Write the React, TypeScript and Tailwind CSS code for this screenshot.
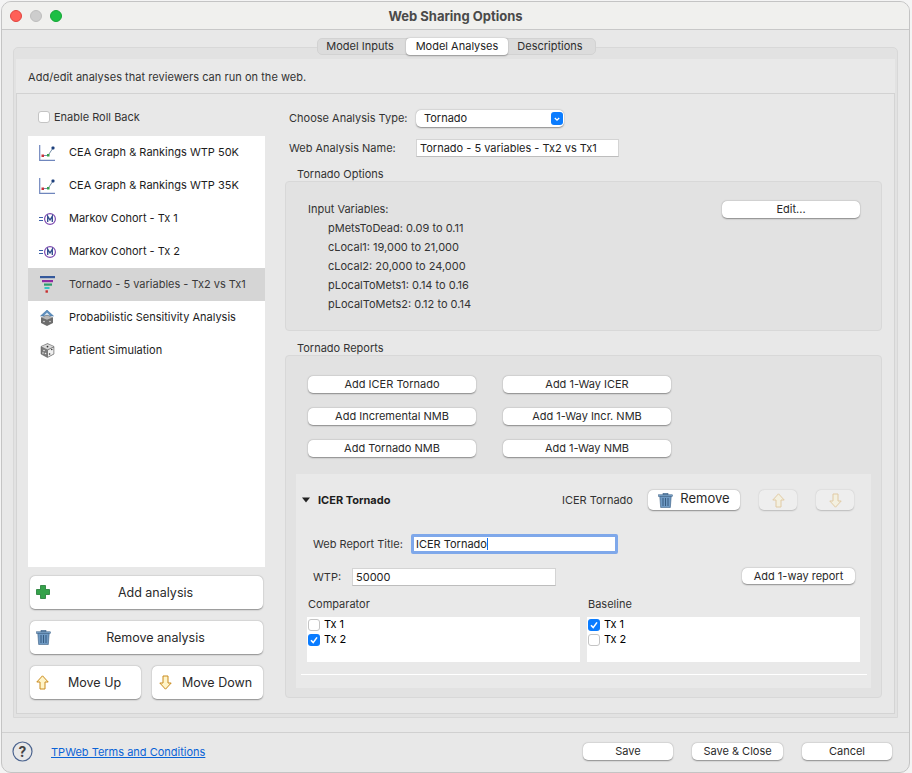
import React from 'react';

const macBtn = 'bg-white rounded-[5px] shadow-[0_0.5px_1.5px_rgba(0,0,0,0.4)] text-[#2a2a2a] flex items-center justify-center';

function PlainBtn({ label, className }: { label: string; className: string }) {
  return <button className={`${macBtn} text-[11px] ${className}`}>{label}</button>;
}

function Check({ on }: { on?: boolean }) {
  if (on) {
    return (
      <span className="w-[12px] h-[12px] rounded-[3px] bg-[#0a7cff] flex items-center justify-center shrink-0">
        <svg width="10" height="10" viewBox="0 0 10 10">
          <path d="M2 5.2 L4.2 7.6 L8 2.4" fill="none" stroke="#fff" strokeWidth="1.6" />
        </svg>
      </span>
    );
  }
  return <span className="w-[12px] h-[12px] rounded-[3px] bg-white border border-[#c4c4c4] shrink-0" />;
}

function GraphIcon() {
  return (
    <svg width="16" height="16" viewBox="0 0 16 16">
      <path d="M0.7 0 V15.3 H16" fill="none" stroke="#6f86bd" strokeWidth="1.2" />
      <path d="M3.5 10.5 H9 L14 3" fill="none" stroke="#51708f" strokeWidth="0.8" />
      <rect x="2.5" y="9.5" width="2.5" height="2.5" fill="#c8303a" />
      <rect x="8" y="9" width="2.5" height="2.5" fill="#35a04a" />
      <rect x="12.5" y="1.5" width="3" height="3" rx="1" fill="#1c3f7c" />
    </svg>
  );
}

function MarkovIcon() {
  return (
    <svg width="17" height="14" viewBox="0 0 17 14">
      <path d="M0 5.5 H4 M0 8.5 H4" stroke="#3a5ea8" strokeWidth="1" />
      <circle cx="11" cy="7" r="5.4" fill="#fff" stroke="#7e4bb0" strokeWidth="1.2" />
      <path d="M8.7 10 V4.2 L11 8 L13.3 4.2 V10" fill="none" stroke="#35518f" strokeWidth="1.4" />
    </svg>
  );
}

function TornadoIcon() {
  return (
    <svg width="15" height="17" viewBox="0 0 15 17">
      <rect x="0" y="0" width="15" height="2.2" fill="#34589b" />
      <rect x="2" y="4" width="11" height="2.2" fill="#8e2aa3" />
      <rect x="4" y="7.5" width="8" height="2.2" fill="#2f9a6b" />
      <rect x="4.5" y="11" width="5" height="2" fill="#35c2c2" />
      <rect x="5.5" y="14.3" width="2.4" height="2.4" fill="#c82e2e" />
    </svg>
  );
}

function PsaIcon() {
  return (
    <svg width="14" height="16" viewBox="0 0 14 16">
      <path d="M7 0 L13.5 6 H0.5 Z" fill="#5d8ebd" stroke="#3c6e9e" strokeWidth="0.5" />
      <path d="M7 2.5 L10 5.5 H4 Z" fill="#d7e4ef" />
      <path d="M7 5 L13 7.5 V13 L7 16 L1 13 V7.5 Z" fill="#6d6d6d" />
      <path d="M7 5.5 L12.5 7.6 L7 9.8 L1.5 7.6 Z" fill="#b9b9b9" />
      <circle cx="4" cy="11.5" r="0.8" fill="#ddd" />
      <circle cx="10" cy="11.5" r="0.8" fill="#ddd" />
    </svg>
  );
}

function DiceIcon() {
  return (
    <svg width="15" height="15" viewBox="0 0 15 15">
      <path d="M7.5 0.5 L14 3.5 V11 L7.5 14.5 L1 11 V3.5 Z" fill="#7b7b7b" stroke="#555" strokeWidth="0.5" />
      <path d="M7.5 1 L13.5 3.6 L7.5 6.6 L1.5 3.6 Z" fill="#d8d8d8" />
      <path d="M8 7.2 L13.5 4.4 V10.7 L8 13.8 Z" fill="#efefef" />
      <circle cx="7.5" cy="3.6" r="0.9" fill="#333" />
      <circle cx="4" cy="7.5" r="0.8" fill="#e6e6e6" />
      <circle cx="5.5" cy="10.5" r="0.8" fill="#e6e6e6" />
      <circle cx="3" cy="10" r="0.8" fill="#e6e6e6" />
      <circle cx="11.8" cy="6.5" r="0.8" fill="#333" />
      <circle cx="9.6" cy="11" r="0.8" fill="#333" />
    </svg>
  );
}

function Trash({ size = 15 }: { size?: number }) {
  return (
    <svg width={size} height={size} viewBox="0 0 15 15">
      <rect x="0.5" y="1.8" width="14" height="1.6" fill="#7ba3c9" stroke="#34597f" strokeWidth="0.5" />
      <rect x="5" y="0.3" width="5" height="1.5" fill="#6a93bb" stroke="#34597f" strokeWidth="0.5" />
      <path d="M1.8 3.4 H13.2 L12.3 14.6 H2.7 Z" fill="#6f9ac4" stroke="#34597f" strokeWidth="0.6" />
      <path d="M5 5 V13 M7.5 5 V13 M10 5 V13" stroke="#2f5378" strokeWidth="0.9" />
    </svg>
  );
}

function Arrow({ down, faded }: { down?: boolean; faded?: boolean }) {
  return (
    <svg width="13" height="15" viewBox="0 0 13 15" className={`${down ? 'rotate-180' : ''} ${faded ? 'opacity-35' : ''}`}>
      <path d="M6.5 0.8 L12.2 7 H9 V14 H4 V7 H0.8 Z" fill="#fff4c8" stroke="#c98a1c" strokeWidth="1" strokeLinejoin="round" />
    </svg>
  );
}

function Plus() {
  return (
    <svg width="14" height="14" viewBox="0 0 14 14">
      <path d="M4.5 0.5 H9.5 V4.5 H13.5 V9.5 H9.5 V13.5 H4.5 V9.5 H0.5 V4.5 H4.5 Z" fill="#35a24a" stroke="#1f7a34" strokeWidth="0.8" strokeLinejoin="round" />
    </svg>
  );
}

const analyses: { name: string; icon: React.ReactNode; selected?: boolean }[] = [
  { name: 'CEA Graph & Rankings WTP 50K', icon: <GraphIcon /> },
  { name: 'CEA Graph & Rankings WTP 35K', icon: <GraphIcon /> },
  { name: 'Markov Cohort - Tx 1', icon: <MarkovIcon /> },
  { name: 'Markov Cohort - Tx 2', icon: <MarkovIcon /> },
  { name: 'Tornado - 5 variables - Tx2 vs Tx1', icon: <TornadoIcon />, selected: true },
  { name: 'Probabilistic Sensitivity Analysis', icon: <PsaIcon /> },
  { name: 'Patient Simulation', icon: <DiceIcon /> },
];

const variables = [
  'pMetsToDead: 0.09 to 0.11',
  'cLocal1: 19,000 to 21,000',
  'cLocal2: 20,000 to 24,000',
  'pLocalToMets1: 0.14 to 0.16',
  'pLocalToMets2: 0.12 to 0.14',
];

const reportBtns = [
  'Add ICER Tornado',
  'Add 1-Way ICER',
  'Add Incremental NMB',
  'Add 1-Way Incr. NMB',
  'Add Tornado NMB',
  'Add 1-Way NMB',
];

function TxList({ checked, className }: { checked: number; className: string }) {
  return (
    <div className={`bg-white h-[45px] ${className}`}>
      {['Tx 1', 'Tx 2'].map((t, i) => (
        <div key={t} className="h-[15px] flex items-center gap-[4px] pl-[1px] text-black">
          <Check on={i === checked} />
          <span>{t}</span>
        </div>
      ))}
    </div>
  );
}

export default function App() {
  return (
    <div className="w-[912px] h-[773px] bg-[#f4f4f4] overflow-hidden text-[11px] text-[#333] font-['Inter','Liberation_Sans',sans-serif]">
      <div className="ml-[1px] mt-[1px] w-[909px] h-[772px] rounded-[10px] bg-[#e8e8e8] border border-[#c4c4c4] overflow-hidden flex flex-col">
        {/* title bar */}
        <div className="h-[28px] shrink-0 bg-[#f0f0ee] border-b border-[#c8c8c8] flex items-center pl-[8px] relative">
          <div className="flex gap-[8px]">
            <span className="w-[12px] h-[12px] rounded-full bg-[#ff5f57] border border-[#e0443e]" />
            <span className="w-[12px] h-[12px] rounded-full bg-[#cdcdcd] border border-[#bdbdbd]" />
            <span className="w-[12px] h-[12px] rounded-full bg-[#1dbf44] border border-[#14a636]" />
          </div>
          <div className="absolute left-0 right-0 top-[5px] text-center text-[13px] font-bold text-[#4a4a4a]">Web Sharing Options</div>
        </div>

        {/* outer tab box */}
        <div className="mt-[17px] ml-[11px] w-[885px] h-[671px] rounded-t-[5px] border border-[#d8d8d8] bg-[#e2e2e2] relative px-[2px] pt-[11px] shrink-0">
          <div className="absolute top-[-10px] left-[303px] w-[279px] h-[17px] rounded-[5px] bg-[#dcdcdc] border border-[#d2d2d2] flex items-center">
            <span className="w-[88px] text-center text-[#2e2e2e] pr-[4px]">Model Inputs</span>
            <span className="w-[102px] h-[17px] rounded-[4px] bg-white shadow-[0_0.5px_1.5px_rgba(0,0,0,0.35)] flex items-center justify-center text-[#222]">Model Analyses</span>
            <span className="w-[87px] text-center text-[#2e2e2e] pr-[3px]">Descriptions</span>
          </div>

          <div className="bg-[#e9e9e9] h-[35px] flex items-center pl-[12px] border-b border-[#d2d2d2] tracking-[0.04px] pt-[2px]">
            Add/edit analyses that reviewers can run on the web.
          </div>

          {/* inner panel */}
          <div className="h-[620px] bg-[#e8e8e8] border-x border-b border-[#d4d4d4] flex">
            {/* left column */}
            <div className="w-[268px] shrink-0 pl-[11px] flex flex-col">
              <label className="flex items-center gap-[4px] mt-[17px] ml-[10px] h-[12px]">
                <Check />
                <span>Enable Roll Back</span>
              </label>
              <div className="mt-[13px] w-[237px] h-[431px] bg-white">
                {analyses.map((a) => (
                  <div key={a.name} className={`h-[33px] flex items-center ${a.selected ? 'bg-[#d5d5d5] text-[#3a3a3a]' : 'text-[#1c1c1c]'}`}>
                    <span className="w-[38px] mr-[3px] flex justify-center shrink-0">{a.icon}</span>
                    <span className="whitespace-nowrap">{a.name}</span>
                  </div>
                ))}
              </div>
              <button className={`${macBtn} relative mt-[9px] ml-[2px] w-[233px] h-[33px] text-[12.5px] pl-[18px] pt-[1px]`}>
                <span className="absolute left-[6px] top-[9px]"><Plus /></span>
                Add analysis
              </button>
              <button className={`${macBtn} relative mt-[12px] ml-[2px] w-[233px] h-[33px] text-[12.5px] pl-[18px] pt-[1px]`}>
                <span className="absolute left-[6px] top-[9px]"><Trash /></span>
                Remove analysis
              </button>
              <div className="mt-[12px] ml-[2px] w-[233px] flex justify-between">
                <button className={`${macBtn} !justify-start pl-[6px] w-[111px] h-[33px] text-[12.5px] gap-[19px]`}>
                  <Arrow />
                  <span className="pt-[1px]">Move Up</span>
                </button>
                <button className={`${macBtn} !justify-start pl-[7px] w-[111px] h-[33px] text-[12.5px] gap-[10px]`}>
                  <Arrow down />
                  <span className="pt-[1px]">Move Down</span>
                </button>
              </div>
            </div>

            {/* right column */}
            <div className="flex-1 pr-[12px] flex flex-col">
              <div className="flex items-center mt-[16px] h-[17px] pl-[4px]">
                <span className="w-[127px]">Choose Analysis Type:</span>
                <div className="w-[148px] h-[17px] bg-white rounded-[5px] shadow-[0_0.5px_1.5px_rgba(0,0,0,0.4)] flex items-center justify-between pl-[8px] pr-[1px] text-[#222]">
                  <span>Tornado</span>
                  <span className="w-[12px] h-[13px] rounded-[3px] bg-[#0a7cff] flex items-center justify-center">
                    <svg width="8" height="8" viewBox="0 0 8 8">
                      <path d="M1.8 3 L4 5.2 L6.2 3" fill="none" stroke="#fff" strokeWidth="1.3" />
                    </svg>
                  </span>
                </div>
              </div>
              <div className="flex items-center mt-[12px] h-[18px] pl-[4px]">
                <span className="w-[127px]">Web Analysis Name:</span>
                <div className="w-[203px] h-[18px] bg-white border border-[#d4d4d4] border-b-[#bdbdbd] flex items-center pl-[3px] text-[#222] whitespace-nowrap">
                  Tornado - 5 variables - Tx2 vs Tx1
                </div>
              </div>

              <div className="mt-[10px] ml-[12px] h-[14px] leading-[14px]">Tornado Options</div>
              <div className="h-[150px] rounded-[4px] bg-[#e2e2e2] border border-[#d8d8d8] relative pl-[22px] pt-[19px]">
                <div className="h-[19px]">Input Variables:</div>
                {variables.map((v) => (
                  <div key={v} className="h-[19px] pl-[20px]">{v}</div>
                ))}
                <PlainBtn label="Edit..." className="absolute left-[436px] top-[19px] w-[138px] h-[17px]" />
              </div>

              <div className="mt-[10px] ml-[12px] h-[14px] leading-[14px]">Tornado Reports</div>
              <div className="h-[343px] rounded-[4px] bg-[#e2e2e2] border border-[#d8d8d8] px-[10px] pt-[20px]">
                <div className="pl-[12px] w-[376px] grid grid-cols-[168px_168px] gap-x-[27px] gap-y-[15px]">
                  {reportBtns.map((b) => (
                    <PlainBtn key={b} label={b} className="h-[17px]" />
                  ))}
                </div>

                <div className="mt-[17px] w-[575px] h-[214px] bg-[#e9e9e9] flex flex-col">
                  <div className="flex items-center h-[20px] mt-[16px]">
                    <svg width="8" height="6" viewBox="0 0 8 6" className="ml-[6px]">
                      <path d="M0 0.5 H8 L4 5.5 Z" fill="#222" />
                    </svg>
                    <span className="ml-[8px] font-bold text-[#1d1d1d] w-[244px]">ICER Tornado</span>
                    <span className="w-[85px]">ICER Tornado</span>
                    <button className={`${macBtn} ml-[1px] w-[92px] h-[20px] text-[13px] gap-[7px]`}>
                      <Trash />
                      <span className="pb-[2px]">Remove</span>
                    </button>
                    <button className="ml-[19px] w-[38px] h-[20px] rounded-[5px] bg-[#eeeeee] shadow-[0_0.5px_1.5px_rgba(0,0,0,0.2)] flex items-center justify-center">
                      <Arrow faded />
                    </button>
                    <button className="ml-[19px] w-[38px] h-[20px] rounded-[5px] bg-[#eeeeee] shadow-[0_0.5px_1.5px_rgba(0,0,0,0.2)] flex items-center justify-center">
                      <Arrow down faded />
                    </button>
                  </div>

                  <div className="flex items-center h-[20px] mt-[24px] pl-[17px]">
                    <span className="w-[98px]">Web Report Title:</span>
                    <div className="w-[207px] h-[20px] bg-white border-[3px] border-[#7fa8ea] rounded-[2px] flex items-center pl-[2px] text-[#222]">
                      ICER Tornado
                      <span className="w-[1px] h-[12px] bg-[#0a6cf0]" />
                    </div>
                  </div>

                  <div className="flex items-center h-[18px] mt-[14px] pl-[17px]">
                    <span className="w-[39px]">WTP:</span>
                    <div className="w-[204px] h-[18px] bg-white border border-[#d4d4d4] border-b-[#bdbdbd] flex items-center pl-[3px] text-[#222]">50000</div>
                    <PlainBtn label="Add 1-way report" className="ml-[186px] -mt-[2px] w-[113px] h-[16px]" />
                  </div>

                  <div className="flex mt-[11px] pl-[11px]">
                    <div className="w-[280px]">
                      <div className="h-[14px] leading-[14px] pl-[1px]">Comparator</div>
                      <TxList checked={1} className="mt-[6px] w-[273px]" />
                    </div>
                    <div className="w-[273px]">
                      <div className="h-[14px] leading-[14px] pl-[1px]">Baseline</div>
                      <TxList checked={0} className="mt-[6px] w-[273px]" />
                    </div>
                  </div>
                  <div className="mt-[12px] ml-[5px] w-[566px] h-[1px] bg-white" />
                </div>
              </div>
            </div>
          </div>
        </div>

        {/* footer */}
        <div className="mt-[14px] border-t border-[#d0d0d0] flex-1 flex items-center relative pb-[2px]">
          <svg width="21" height="21" viewBox="0 0 21 21" className="ml-[10px]">
            <circle cx="10.5" cy="10.5" r="9.5" fill="none" stroke="#4e6690" strokeWidth="1.2" />
            <text x="10.5" y="15.5" textAnchor="middle" fontSize="14" fontWeight="700" fill="#444" fontFamily="Inter, sans-serif">?</text>
          </svg>
          <a className="ml-[18px] mt-[2px] text-[#0a63d6] underline">TPWeb Terms and Conditions</a>
          <PlainBtn label="Save" className="ml-auto w-[90px] h-[17px]" />
          <PlainBtn label="Save & Close" className="ml-[19px] w-[91px] h-[17px]" />
          <PlainBtn label="Cancel" className="ml-[19px] mr-[17px] w-[90px] h-[17px]" />
        </div>
      </div>
    </div>
  );
}
